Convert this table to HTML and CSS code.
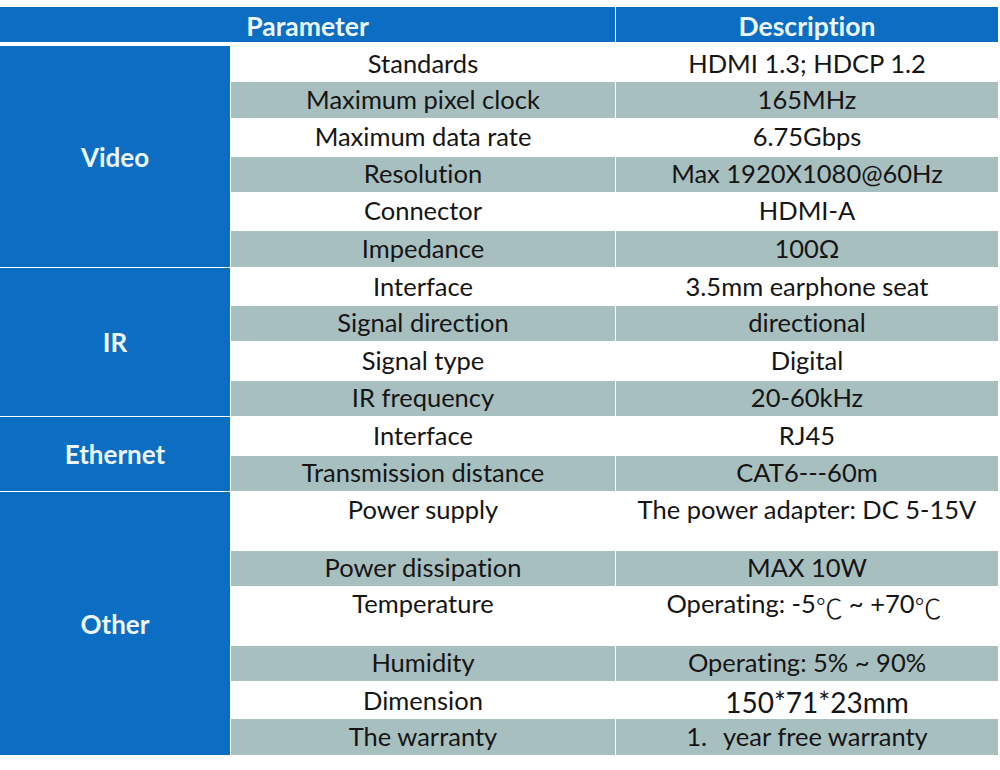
FILE: index.html
```html
<!DOCTYPE html>
<html>
<head>
<meta charset="utf-8">
<link rel="stylesheet" href="styles.css">
</head>
<body>
<div class="sheet">
  <div class="head">
    <div class="hcell">Parameter</div>
    <div class="hcell">Description</div>
  </div>

  <div class="group">
    <div class="label">Video</div>
    <div class="rows">
      <div class="row h36"><div class="c">Standards</div><div class="c">HDMI 1.3; HDCP 1.2</div></div>
      <div class="row h36 alt"><div class="c">Maximum pixel clock</div><div class="c">165MHz</div></div>
      <div class="row h39"><div class="c">Maximum data rate</div><div class="c">6.75Gbps</div></div>
      <div class="row h35 alt"><div class="c">Resolution</div><div class="c">Max 1920X1080@60Hz</div></div>
      <div class="row h39"><div class="c">Connector</div><div class="c">HDMI-A</div></div>
      <div class="row h36 alt"><div class="c">Impedance</div><div class="c">100Ω</div></div>
    </div>
  </div>

  <div class="group">
    <div class="label">IR</div>
    <div class="rows">
      <div class="row h38"><div class="c">Interface</div><div class="c">3.5mm earphone seat</div></div>
      <div class="row h35 alt"><div class="c">Signal direction</div><div class="c">directional</div></div>
      <div class="row h40"><div class="c">Signal type</div><div class="c">Digital</div></div>
      <div class="row h35 alt"><div class="c">IR frequency</div><div class="c">20-60kHz</div></div>
    </div>
  </div>

  <div class="group">
    <div class="label">Ethernet</div>
    <div class="rows">
      <div class="row h39"><div class="c">Interface</div><div class="c">RJ45</div></div>
      <div class="row h35 alt"><div class="c">Transmission distance</div><div class="c">CAT6---60m</div></div>
    </div>
  </div>

  <div class="group">
    <div class="label">Other</div>
    <div class="rows">
      <div class="row h59 top"><div class="c">Power supply</div><div class="c">The power adapter: DC 5-15V</div></div>
      <div class="row h35 alt"><div class="c">Power dissipation</div><div class="c">MAX 10W</div></div>
      <div class="row h60 top"><div class="c">Temperature</div><div class="c">Operating: -5<span class="deg">℃</span> ~ +70<span class="deg">℃</span></div></div>
      <div class="row h35 alt"><div class="c">Humidity</div><div class="c">Operating: 5% ~ 90%</div></div>
      <div class="row h38"><div class="c">Dimension</div><div class="c big">150*71*23mm</div></div>
      <div class="row h36 alt"><div class="c">The warranty</div><div class="c">1.<span class="tab"></span>year free warranty</div></div>
    </div>
  </div>
</div>
</body>
</html>
```

FILE: styles.css
```css
html, body {
  margin: 0;
  padding: 0;
  background: #ffffff;
}
body {
  font-family: Lato, "Open Sans", sans-serif;
  font-variant-ligatures: none;
  color: #151515;
}
.sheet {
  width: 998px;
  padding-top: 7px;
  display: flex;
  flex-direction: column;
  gap: 1px;
}
.head {
  display: grid;
  grid-template-columns: 615px 1fr;
  column-gap: 1px;
  height: 35px;
  margin-bottom: 3px;
}
.hcell {
  background: #0b6ec2;
  color: #eef6ff;
  font-weight: bold;
  font-size: 26.5px;
  display: flex;
  align-items: center;
  justify-content: center;
  padding-top: 2px;
  box-sizing: border-box;
}
.group {
  display: flex;
  gap: 1px;
}
.label {
  width: 230px;
  flex: none;
  background: #0b6ec2;
  color: #eef6ff;
  font-weight: bold;
  font-size: 26px;
  display: flex;
  align-items: center;
  justify-content: center;
}
.rows {
  flex: 1;
  display: flex;
  flex-direction: column;
}
.row {
  display: grid;
  grid-template-columns: 384px 1fr;
  column-gap: 1px;
  font-size: 25.5px;
}
.row.alt .c {
  background: #a8bfc0;
}
.c {
  display: flex;
  align-items: center;
  justify-content: center;
  white-space: nowrap;
  padding-bottom: 3px;
  box-sizing: border-box;
}
.row.top .c {
  align-items: flex-start;
  padding-top: 2px;
}
.big {
  font-size: 28px;
  padding-left: 20px;
  padding-top: 4px;
}
.deg {
  font-family: "Noto Sans CJK SC", sans-serif;
  font-weight: 300;
  font-size: 27px;
  margin-right: 6px;
}
.tab {
  display: inline-block;
  width: 16px;
}
.h35 { height: 35px; }
.h36 { height: 36px; }
.h38 { height: 38px; }
.h39 { height: 39px; }
.h40 { height: 40px; }
.h59 { height: 59px; }
.h60 { height: 60px; }
```
